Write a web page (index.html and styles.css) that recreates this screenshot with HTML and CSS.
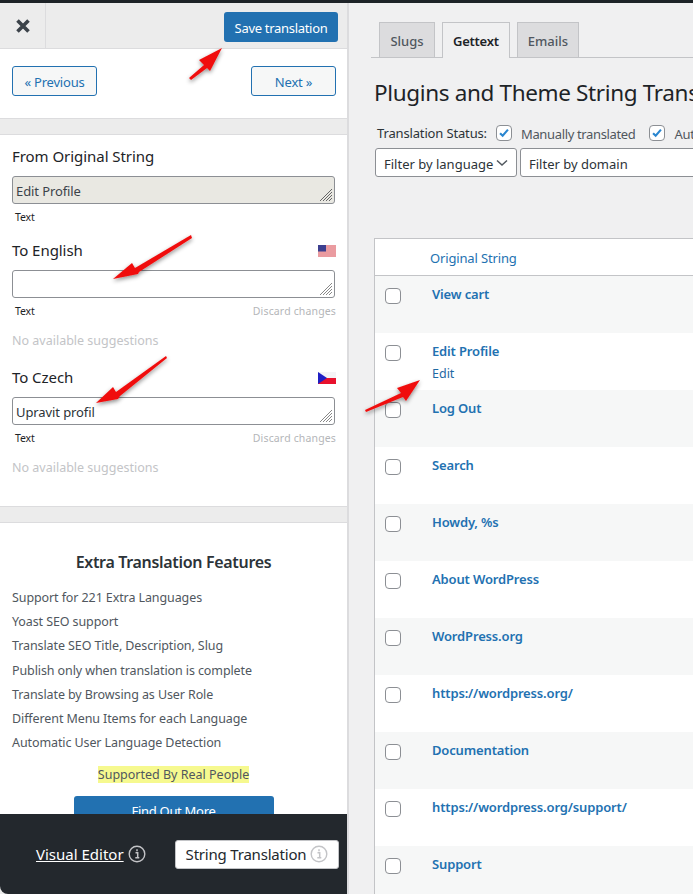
FILE: index.html
```html
<!DOCTYPE html>
<html lang="en">
<head>
<meta charset="utf-8">
<title>String Translation</title>
<link rel="stylesheet" href="styles.css">
</head>
<body>
<div class="topline"></div>
<div class="app">
  <aside class="panel">
    <div class="scroll">
      <header class="bar">
        <button class="close" aria-label="Close"><svg width="16" height="16" viewBox="0 0 16 16"><path d="M2.5 2.5l11 11M13.5 2.5l-11 11" stroke="#3c434a" stroke-width="3.6" fill="none"/></svg></button>
        <button class="save">Save translation</button>
      </header>
      <nav class="pager">
        <button class="ghost">« Previous</button>
        <button class="ghost">Next »</button>
      </nav>
      <section class="strings">
        <div class="field field-first">
          <div class="field-head"><h3>From Original String</h3></div>
          <div class="box box-ro"><span>Edit Profile</span><svg class="grip" viewBox="0 0 14 14"><path d="M1 13L13 1M4 13L13 4M7 13l6-6M10 13l3-3" stroke="#666" fill="none"/></svg></div>
          <div class="meta"><span class="kind">Text</span></div>
        </div>
        <div class="field">
          <div class="field-head"><h3>To English</h3>
            <svg class="flag" viewBox="0 0 18 12"><rect width="18" height="12" fill="#f4f4f6"/><path d="M0 1h18M0 3h18M0 5h18M0 7h18M0 9h18M0 11h18" stroke="#e0424a" stroke-width="1"/><rect width="8" height="6.5" fill="#3c3f8f"/></svg></div>
          <div class="box"><span></span><svg class="grip" viewBox="0 0 14 14"><path d="M1 13L13 1M4 13L13 4M7 13l6-6M10 13l3-3" stroke="#888" fill="none"/></svg></div>
          <div class="meta"><span class="kind">Text</span><span class="discard">Discard changes</span></div>
          <p class="none">No available suggestions</p>
        </div>
        <div class="field">
          <div class="field-head"><h3>To Czech</h3>
            <svg class="flag" viewBox="0 0 18 12"><rect width="18" height="6" fill="#f4f4f6"/><rect y="6" width="18" height="6" fill="#e8112d"/><path d="M0 0l9 6-9 6z" fill="#1f1fc4"/></svg></div>
          <div class="box"><span>Upravit profil</span><svg class="grip" viewBox="0 0 14 14"><path d="M1 13L13 1M4 13L13 4M7 13l6-6M10 13l3-3" stroke="#888" fill="none"/></svg></div>
          <div class="meta"><span class="kind">Text</span><span class="discard">Discard changes</span></div>
          <p class="none">No available suggestions</p>
        </div>
      </section>
      <section class="extra">
        <h2>Extra Translation Features</h2>
        <ul>
          <li>Support for 221 Extra Languages</li>
          <li>Yoast SEO support</li>
          <li>Translate SEO Title, Description, Slug</li>
          <li>Publish only when translation is complete</li>
          <li>Translate by Browsing as User Role</li>
          <li>Different Menu Items for each Language</li>
          <li>Automatic User Language Detection</li>
        </ul>
        <p class="real"><mark>Supported By Real People</mark></p>
        <button class="more">Find Out More</button>
      </section>
    </div>
    <footer class="foot">
      <a class="visual" href="#">Visual Editor</a>
      <svg class="info" viewBox="0 0 18 18"><circle cx="9" cy="9" r="7.8" fill="none" stroke="#c3c4c7" stroke-width="1.4"/><path d="M7.5 7.8h2.2v4.6M7.3 12.8h4M9 4.3v2" stroke="#c3c4c7" stroke-width="1.5" fill="none"/></svg>
      <div class="mode">String Translation
        <svg class="info" viewBox="0 0 18 18"><circle cx="9" cy="9" r="7.8" fill="none" stroke="#c3c4c7" stroke-width="1.4"/><path d="M7.5 7.8h2.2v4.6M7.3 12.8h4M9 4.3v2" stroke="#c3c4c7" stroke-width="1.5" fill="none"/></svg>
      </div>
    </footer>
  </aside>
  <main class="main">
    <div class="tabs">
      <a class="tab" href="#">Slugs</a>
      <a class="tab active" href="#">Gettext</a>
      <a class="tab" href="#">Emails</a>
    </div>
    <h1>Plugins and Theme String Translation</h1>
    <div class="status">
      <span class="status-label">Translation Status:</span>
      <span class="check on"><svg viewBox="0 0 16 16"><path d="M3.5 8.2l3 3 6-7" stroke="#2a86d0" stroke-width="2.4" fill="none"/></svg></span>
      <span class="status-opt">Manually translated</span>
      <span class="check on"><svg viewBox="0 0 16 16"><path d="M3.5 8.2l3 3 6-7" stroke="#2a86d0" stroke-width="2.4" fill="none"/></svg></span>
      <span class="status-opt">Automatically translated</span>
    </div>
    <div class="filters">
      <div class="select">Filter by language<svg viewBox="0 0 12 8"><path d="M1 1.5l5 4.5 5-4.5" stroke="#50575e" stroke-width="1.5" fill="none"/></svg></div>
      <div class="select wide">Filter by domain</div>
    </div>
    <div class="table">
      <div class="thead">Original String</div>
      <div class="row"><span class="check"></span><a href="#">View cart</a></div>
      <div class="row"><span class="check"></span><div><a href="#">Edit Profile</a><a class="action" href="#">Edit</a></div></div>
      <div class="row"><span class="check"></span><a href="#">Log Out</a></div>
      <div class="row"><span class="check"></span><a href="#">Search</a></div>
      <div class="row"><span class="check"></span><a href="#">Howdy, %s</a></div>
      <div class="row"><span class="check"></span><a href="#">About WordPress</a></div>
      <div class="row"><span class="check"></span><a href="#">WordPress.org</a></div>
      <div class="row"><span class="check"></span><a href="#">https://wordpress.org/</a></div>
      <div class="row"><span class="check"></span><a href="#">Documentation</a></div>
      <div class="row"><span class="check"></span><a href="#">https://wordpress.org/support/</a></div>
      <div class="row"><span class="check"></span><a href="#">Support</a></div>
    </div>
  </main>
</div>
<svg class="arrows" viewBox="0 0 693 894" aria-hidden="true">
  <defs>
    <filter id="sh" x="-30%" y="-30%" width="160%" height="160%"><feDropShadow dx="0" dy="2" stdDeviation="2" flood-color="#000" flood-opacity=".45"/></filter>
  </defs>
  <g fill="#f01010" filter="url(#sh)">
    <path d="M222 48L199 60 204 65 189 78 191 80 207 68 210 71z"/>
    <path d="M113 279L132 263 135 268 191 235 192 238 139 272 138 274z"/>
    <path d="M96 403L113 387 116 392 166 356 167 358 120 396 118 399z"/>
    <path d="M420 380L397 388 401 393 365 410 366 412 403 397 406 401z"/>
  </g>
</svg>
</body>
</html>
```
FILE: styles.css
```css
* { box-sizing: border-box; }
html, body { margin: 0; height: 894px; overflow: hidden; }
body { background: #f0f0f1; font-family: "Noto Sans", "Open Sans", sans-serif; font-size: 13px; color: #3c434a; position: relative; }
button { font: inherit; cursor: pointer; }
h1, h2, h3, p, ul { margin: 0; padding: 0; }
.topline { height: 3px; background: #1d2327; }
.app { display: flex; height: 891px; }

.panel { width: 349px; flex: none; display: flex; flex-direction: column; background: #ececec; border-right: 2px solid #dcdcde; overflow: hidden; }
.scroll { flex: 1; overflow: hidden; min-height: 0; }
.bar { height: 46px; display: flex; justify-content: space-between; align-items: flex-start; border-bottom: 1px solid #dcdcde; padding-right: 9px; background: #ececec; }
.close { width: 46px; height: 45px; background: none; border: 0; border-right: 1px solid #dcdcde; display: flex; align-items: center; justify-content: center; padding: 1px 0 0; }
.save { margin-top: 9px; width: 114px; height: 30px; background: #2271b1; color: #fff; border: 0; border-radius: 3px; padding: 2px 0 0; letter-spacing: -.3px; }
.pager { height: 70px; background: #fff; display: flex; justify-content: space-between; padding: 17px 11px 0 12px; border-bottom: 1px solid #dcdcde; }
.ghost { width: 85px; height: 30px; background: #f6f7f7; border: 1px solid #2271b1; border-radius: 3px; color: #2271b1; padding: 2px 0 0; letter-spacing: -.2px; }
.strings { margin-top: 15px; height: 373px; background: #fff; border-top: 1px solid #dcdcde; border-bottom: 1px solid #dcdcde; padding: 10px 11px 0 12px; }
.field { margin-bottom: 17px; }
.field-first { margin-bottom: 15px; }
.field-head { display: flex; justify-content: space-between; align-items: center; height: 22px; margin-bottom: 9px; }
.field-head h3 { font-size: 15px; font-weight: 400; color: #1d2327; letter-spacing: -.05px; }
.flag { width: 18px; height: 12px; margin-top: 2px; }
.box { width: 323px; height: 28px; border: 1px solid #8c8f94; border-radius: 3px; background: #fff; padding: 5px 3px 3px; position: relative; font-size: 13px; line-height: 18px; color: #2c3338; letter-spacing: -.1px; }
.box-ro { background: #e9e8e2; color: #3c434a; }
.grip { position: absolute; right: 1px; bottom: 1px; width: 14px; height: 14px; }
.meta { display: flex; justify-content: space-between; font-size: 10.5px; line-height: 14px; margin-top: 6px; padding-left: 3px; }
.kind { color: #1d2327; letter-spacing: -.1px; }
.discard { color: #b4b6b9; letter-spacing: .15px; }
.none { margin-top: 14px; font-size: 12.5px; line-height: 17px; color: #c3c4c7; }
.extra { margin-top: 15px; background: #fff; border-top: 1px solid #dcdcde; padding: 28px 12px 0; height: 320px; }
.extra h2 { font-size: 16px; line-height: 22px; font-weight: 600; color: #2c3338; text-align: center; letter-spacing: -.32px; margin-bottom: 13px; }
.extra ul { list-style: none; }
.extra li { font-size: 12.5px; line-height: 24.2px; color: #50575e; letter-spacing: -.1px; }
.real { text-align: center; font-size: 12.5px; line-height: 16px; margin-top: 12px; color: #50575e; }
.real mark { background: #f6f98f; color: inherit; }
.more { display: block; margin: 13px auto 0; width: 200px; height: 30px; background: #2271b1; color: #fff; border: 0; border-radius: 3px; padding: 0; letter-spacing: -.3px; }
.foot { flex: none; height: 80px; background: #23282d; display: flex; align-items: center; padding: 0 8px 0 36px; border-bottom-left-radius: 8px; position: relative; }
.visual { color: #fff; font-size: 15px; letter-spacing: 0; }
.info { width: 18px; height: 18px; margin-left: 4px; flex: none; }
.mode { margin-left: auto; width: 164px; height: 29px; background: #fff; border-radius: 3px; border: 1px solid #c3c4c7; display: flex; align-items: center; justify-content: center; font-size: 15px; letter-spacing: -.2px; color: #23282d; white-space: nowrap; }

.main { flex: 1; min-width: 0; padding: 19px 0 0 25px; overflow: hidden; }
.tabs { display: flex; gap: 7px; height: 36px; padding-left: 8px; border-bottom: 1px solid #c3c4c7; margin-left: -3px; margin-right: -100px; }
.tab { height: 35px; min-width: 56px; text-align: center; padding: 0 10px; line-height: 37px; background: #dcdcde; border: 1px solid #c3c4c7; border-bottom: 0; color: #50575e; text-decoration: none; font-weight: 500; }
.tab.active { height: 36px; background: #f0f0f1; color: #1d2327; margin-bottom: -1px; font-weight: 600; letter-spacing: -.25px; }
h1 { font-size: 22.5px; line-height: 30px; font-weight: 400; color: #1d2327; margin-top: 20px; white-space: nowrap; letter-spacing: -.35px; }
.status { display: flex; align-items: center; margin-top: 14px; height: 22px; margin-left: 3px; font-size: 13px; white-space: nowrap; }
.status-opt { color: #50575e; margin: 2px 14px 0 9px; letter-spacing: -.35px; }
.status-label { color: #2c3338; margin-right: 9px; letter-spacing: -.15px; }
.check { display: inline-block; width: 16px; height: 16px; border: 1px solid #8c8f94; border-radius: 4px; background: #fff; flex: none; }
.check svg { display: block; width: 14px; height: 14px; }
.filters { display: flex; gap: 3px; margin: 4px -200px 0 1px; }
.select { width: 142px; height: 29px; border: 1px solid #8c8f94; border-radius: 3px; background: #fff; color: #2c3338; display: flex; align-items: center; justify-content: space-between; padding: 2px 8px 0; flex: none; }
.select svg { width: 12px; height: 8px; margin-top: -2px; }
.select.wide { width: 340px; }
.table { margin-top: 61px; width: 420px; border: 1px solid #c3c4c7; border-right: 0; background: #fff; }
.thead { height: 37px; line-height: 38px; padding-left: 55px; color: #2271b1; border-bottom: 1px solid #c3c4c7; letter-spacing: -.15px; }
.row { height: 57px; display: flex; align-items: flex-start; padding: 9px 0 0 10px; gap: 31px; }
.row:nth-child(even) { background: #f6f7f7; }
.row .check { margin-top: 3px; }
.row a { color: #2271b1; font-weight: 600; text-decoration: none; letter-spacing: -.15px; line-height: 18px; }
.row a.action { display: block; font-weight: 400; font-size: 12.5px; line-height: 18px; margin-top: 5px; letter-spacing: 0; color: #1f69a3; }

.arrows { position: absolute; left: 0; top: 0; width: 693px; height: 894px; pointer-events: none; }
```
